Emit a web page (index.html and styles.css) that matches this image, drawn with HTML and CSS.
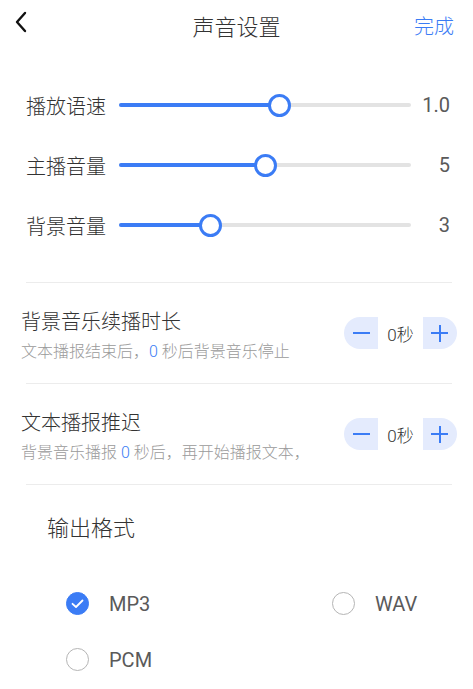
FILE: index.html
```html
<!DOCTYPE html>
<html lang="zh-CN">
    <head>
        <meta charset="utf-8">
        <link rel="stylesheet" href="styles.css">
    </head>
    <body>
        <header class="top-bar">
            <div class="back">
                <svg width="14" height="22" viewBox="0 0 14 22"><path d="M11 2 L3 11 L11 20" fill="none" stroke="#111" stroke-width="2.4" stroke-linecap="round" stroke-linejoin="round"/></svg>
            </div>
            <h1 class="title">声音设置</h1>
            <div class="done">完成</div>
        </header>

        <section class="sliders">
            <div class="slider-row">
                <span class="slider-label">播放语速</span>
                <div class="track">
                    <div class="fill" style="width:55.1%"></div>
                    <div class="thumb" style="left:55.1%"></div>
                </div>
                <span class="slider-value">1.0</span>
            </div>
            <div class="slider-row">
                <span class="slider-label">主播音量</span>
                <div class="track">
                    <div class="fill" style="width:50%"></div>
                    <div class="thumb" style="left:50%"></div>
                </div>
                <span class="slider-value">5</span>
            </div>
            <div class="slider-row">
                <span class="slider-label">背景音量</span>
                <div class="track">
                    <div class="fill" style="width:31.2%"></div>
                    <div class="thumb" style="left:31.2%"></div>
                </div>
                <span class="slider-value">3</span>
            </div>
        </section>

        <div class="divider"></div>

        <section class="option">
            <div class="option-text">
                <div class="option-title">背景音乐续播时长</div>
                <div class="option-desc">文本播报结束后，<em>0</em> 秒后背景音乐停止</div>
            </div>
            <div class="stepper">
                <div class="step minus"><i></i></div>
                <div class="step-value">0秒</div>
                <div class="step plus"><i></i><b></b></div>
            </div>
        </section>

        <div class="divider"></div>

        <section class="option">
            <div class="option-text">
                <div class="option-title">文本播报推迟</div>
                <div class="option-desc">背景音乐播报 <em>0</em> 秒后，再开始播报文本，</div>
            </div>
            <div class="stepper">
                <div class="step minus"><i></i></div>
                <div class="step-value">0秒</div>
                <div class="step plus"><i></i><b></b></div>
            </div>
        </section>

        <div class="divider"></div>

        <section class="format">
            <h2 class="format-title">输出格式</h2>
            <ul class="radio-list">
                <li class="radio checked">
                    <span class="circle">
                        <svg width="23" height="23" viewBox="0 0 23 23"><path d="M6.5 11.8 L10 15 L16.5 8.5" fill="none" stroke="#fff" stroke-width="1.8" stroke-linecap="round" stroke-linejoin="round"/></svg>
                    </span>
                    <span class="radio-text">MP3</span>
                </li>
                <li class="radio">
                    <span class="circle"></span>
                    <span class="radio-text">WAV</span>
                </li>
                <li class="radio">
                    <span class="circle"></span>
                    <span class="radio-text">PCM</span>
                </li>
            </ul>
        </section>
    </body>
</html>
```

FILE: styles.css
```css
*{
    box-sizing: border-box;
}
body{
    margin: 0;
    background: #fff;
    color: #333;
    font-family: Roboto, "Noto Sans CJK SC", sans-serif;
}
ul{
    margin: 0;
    padding: 0;
}
li{
    list-style: none;
}
h1,h2{
    margin: 0;
    font-weight: normal;
}
em{
    font-style: normal;
    color: #3b7cf5;
}

/* top bar */
.top-bar{
    height: 50px;
    display: flex;
    align-items: center;
    justify-content: space-between;
    padding: 0 19px 0 14px;
    position: relative;
}
.back{
    width: 14px;
    height: 22px;
    margin-top: -7px;
}
.back svg{
    display: block;
}
.title{
    font-size: 22px;
    font-weight: 300;
    color: #333;
    position: absolute;
    left: 50%;
    transform: translateX(-50%);
}
.done{
    font-size: 20px;
    font-weight: 300;
    color: #3b7cf5;
}

/* sliders */
.sliders{
    padding: 25px 23px 27px 26px;
}
.slider-row{
    height: 60px;
    display: flex;
    align-items: center;
}
.slider-label{
    width: 93px;
    font-size: 20px;
    font-weight: 300;
    color: #333;
}
.track{
    width: 292px;
    height: 4px;
    border-radius: 2px;
    background: #e3e3e3;
    position: relative;
}
.fill{
    height: 100%;
    border-radius: 2px;
    background: #3b7cf5;
}
.thumb{
    position: absolute;
    top: 50%;
    width: 23px;
    height: 23px;
    margin: -11.5px 0 0 -11.5px;
    border-radius: 50%;
    border: 3px solid #3b7cf5;
    background: #fff;
}
.slider-value{
    flex: 1;
    text-align: right;
    font-size: 20px;
    color: #5a5a5a;
}

.divider{
    height: 1px;
    margin: 0 21px 0 26px;
    background: #ececec;
}

/* options */
.option{
    display: flex;
    align-items: center;
    justify-content: space-between;
    padding: 20px 16px 20px 21px;
}
.option-text{
    padding-top: 5px;
}
.option-title{
    font-size: 20px;
    font-weight: 300;
    line-height: 28px;
    color: #333;
}
.option-desc{
    margin-top: 5px;
    font-size: 16px;
    font-weight: 300;
    line-height: 22px;
    color: #9a9a9a;
}
.stepper{
    display: flex;
    align-items: center;
    height: 32px;
}
.step{
    width: 34px;
    height: 32px;
    background: #e4ebfd;
    position: relative;
}
.step.minus{
    border-radius: 16px 0 0 16px;
}
.step.plus{
    border-radius: 0 16px 16px 0;
}
.step i,.step b{
    position: absolute;
    background: #3b7cf5;
}
.step i{
    left: 9px;
    top: 15px;
    width: 17px;
    height: 2px;
}
.step.plus i{
    left: 8px;
}
.step b{
    left: 15.5px;
    top: 7.5px;
    width: 2px;
    height: 17px;
}
.step-value{
    width: 45px;
    text-align: center;
    font-size: 17px;
    font-weight: 300;
    color: #333;
}

/* output format */
.format{
    padding: 28px 0 0 47px;
}
.format-title{
    font-size: 22px;
    font-weight: 300;
    line-height: 32px;
    color: #333;
}
.radio-list{
    display: grid;
    grid-template-columns: 266px auto;
    row-gap: 33px;
    margin: 47px 0 0 19px;
}
.radio{
    display: flex;
    align-items: center;
    height: 23px;
}
.circle{
    width: 23px;
    height: 23px;
    border-radius: 50%;
    border: 1px solid #b5b5b5;
    margin-right: 20px;
}
.circle svg{
    display: block;
    margin: -1px;
}
.radio.checked .circle{
    border-color: #3b7cf5;
    background: #3b7cf5;
}
.radio-text{
    font-size: 20px;
    color: #5a5a5a;
}
```
